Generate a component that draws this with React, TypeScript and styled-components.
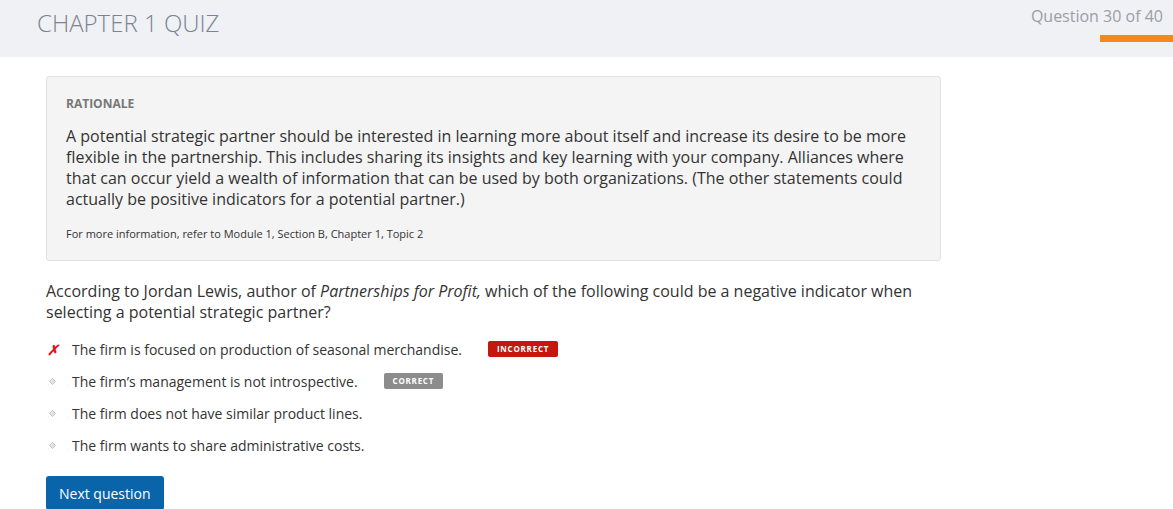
import React from "react";
import styled, { createGlobalStyle } from "styled-components";

const GlobalStyle = createGlobalStyle`
  body {
    margin: 0;
    background: #ffffff;
    font-family: "Open Sans", "Liberation Sans", sans-serif;
    color: #333;
  }
`;

const Header = styled.header`
  height: 57px;
  background: #eff1f5;
  display: flex;
  justify-content: space-between;
  align-items: flex-start;
`;

const Title = styled.h1`
  margin: 6px 0 0 37px;
  font-size: 24px;
  font-weight: 300;
  color: #7d8390;
`;

const Progress = styled.div`
  display: flex;
  flex-direction: column;
  align-items: flex-end;
  padding-top: 6px;
`;

const Counter = styled.div`
  font-size: 16px;
  color: #9a9ea6;
  margin-right: 10px;
  line-height: 20px;
`;

const Bar = styled.div`
  margin-top: 9px;
  width: 73px;
  height: 7px;
  background: #f08a1f;
`;

const Main = styled.main`
  width: 895px;
  margin-left: 46px;
  padding-top: 19px;
`;

const Rationale = styled.section`
  background: #f4f4f4;
  border: 1px solid #e2e2e2;
  border-radius: 3px;
  padding: 19px 19px 18px;
`;

const Label = styled.div`
  font-size: 12px;
  font-weight: 700;
  color: #777;
  line-height: 16px;
`;

const Body = styled.p`
  margin: 14px 0 0;
  font-size: 16px;
  line-height: 21px;
  color: #333;
`;

const Ref = styled.p`
  margin: 16px 0 0;
  font-size: 11px;
  line-height: 16px;
  color: #333;
`;

const Question = styled.p`
  margin: 20px 0 0;
  font-size: 16px;
  line-height: 21px;
  color: #333;
`;

const Options = styled.ul`
  list-style: none;
  margin: 16px 0 0;
  padding: 0;
  display: flex;
  flex-direction: column;
  gap: 12px;
`;

const Option = styled.li`
  display: flex;
  align-items: center;
  height: 20px;
  font-size: 14px;
  color: #333;
`;

const Mark = styled.span<{ $wrong?: boolean }>`
  width: 26px;
  flex: none;
  display: flex;
  align-items: center;
  padding-left: ${(p) => (p.$wrong ? "1px" : "3px")};
  box-sizing: border-box;
  color: ${(p) => (p.$wrong ? "#e3141b" : "#c8c8c8")};
  font-size: 14px;
  font-weight: 700;
  font-style: ${(p) => (p.$wrong ? "italic" : "normal")};
`;

const Badge = styled.span<{ $tone: "bad" | "ok" }>`
  margin-left: 26px;
  background: ${(p) => (p.$tone === "bad" ? "#c4170d" : "#8c8c8c")};
  color: #fff;
  font-size: 8px;
  font-weight: 700;
  letter-spacing: 0.75px;
  line-height: 16px;
  padding: 0 9px;
  border-radius: 2px;
`;

const NextButton = styled.button`
  margin-top: 21px;
  background: #0a64a9;
  color: #fff;
  border: none;
  border-radius: 3px;
  font-family: "Open Sans", "Liberation Sans", sans-serif;
  font-size: 14px;
  padding: 0 13px;
  height: 34px;
  cursor: pointer;
`;

const Dot = () => (
  <svg width="7" height="7" viewBox="0 0 7 7">
    <path d="M3.5 0.5 L6.5 3.5 L3.5 6.5 L0.5 3.5 Z" fill="#e4e4e4" stroke="#c4c4c4" strokeWidth="1" />
  </svg>
);

const options = [
  { text: "The firm is focused on production of seasonal merchandise.", wrong: true, badge: "bad" as const, label: "INCORRECT" },
  { text: "The firm\u2019s management is not introspective.", badge: "ok" as const, label: "CORRECT" },
  { text: "The firm does not have similar product lines." },
  { text: "The firm wants to share administrative costs." },
];

export default function App() {
  return (
    <>
      <GlobalStyle />
      <Header>
        <Title>CHAPTER 1 QUIZ</Title>
        <Progress>
          <Counter>Question 30 of 40</Counter>
          <Bar />
        </Progress>
      </Header>
      <Main>
        <Rationale>
          <Label>RATIONALE</Label>
          <Body>
            A potential strategic partner should be interested in learning more about itself and increase its desire to be more
            flexible in the partnership. This includes sharing its insights and key learning with your company. Alliances where
            that can occur yield a wealth of information that can be used by both organizations. (The other statements could
            actually be positive indicators for a potential partner.)
          </Body>
          <Ref>For more information, refer to Module 1, Section B, Chapter 1, Topic 2</Ref>
        </Rationale>
        <Question>
          According to Jordan Lewis, author of <em>Partnerships for Profit,</em> which of the following could be a negative indicator when
          selecting a potential strategic partner?
        </Question>
        <Options>
          {options.map((o) => (
            <Option key={o.text}>
              <Mark $wrong={o.wrong}>{o.wrong ? "\u2717" : <Dot />}</Mark>
              {o.text}
              {o.badge && <Badge $tone={o.badge}>{o.label}</Badge>}
            </Option>
          ))}
        </Options>
        <NextButton>Next question</NextButton>
      </Main>
    </>
  );
}
